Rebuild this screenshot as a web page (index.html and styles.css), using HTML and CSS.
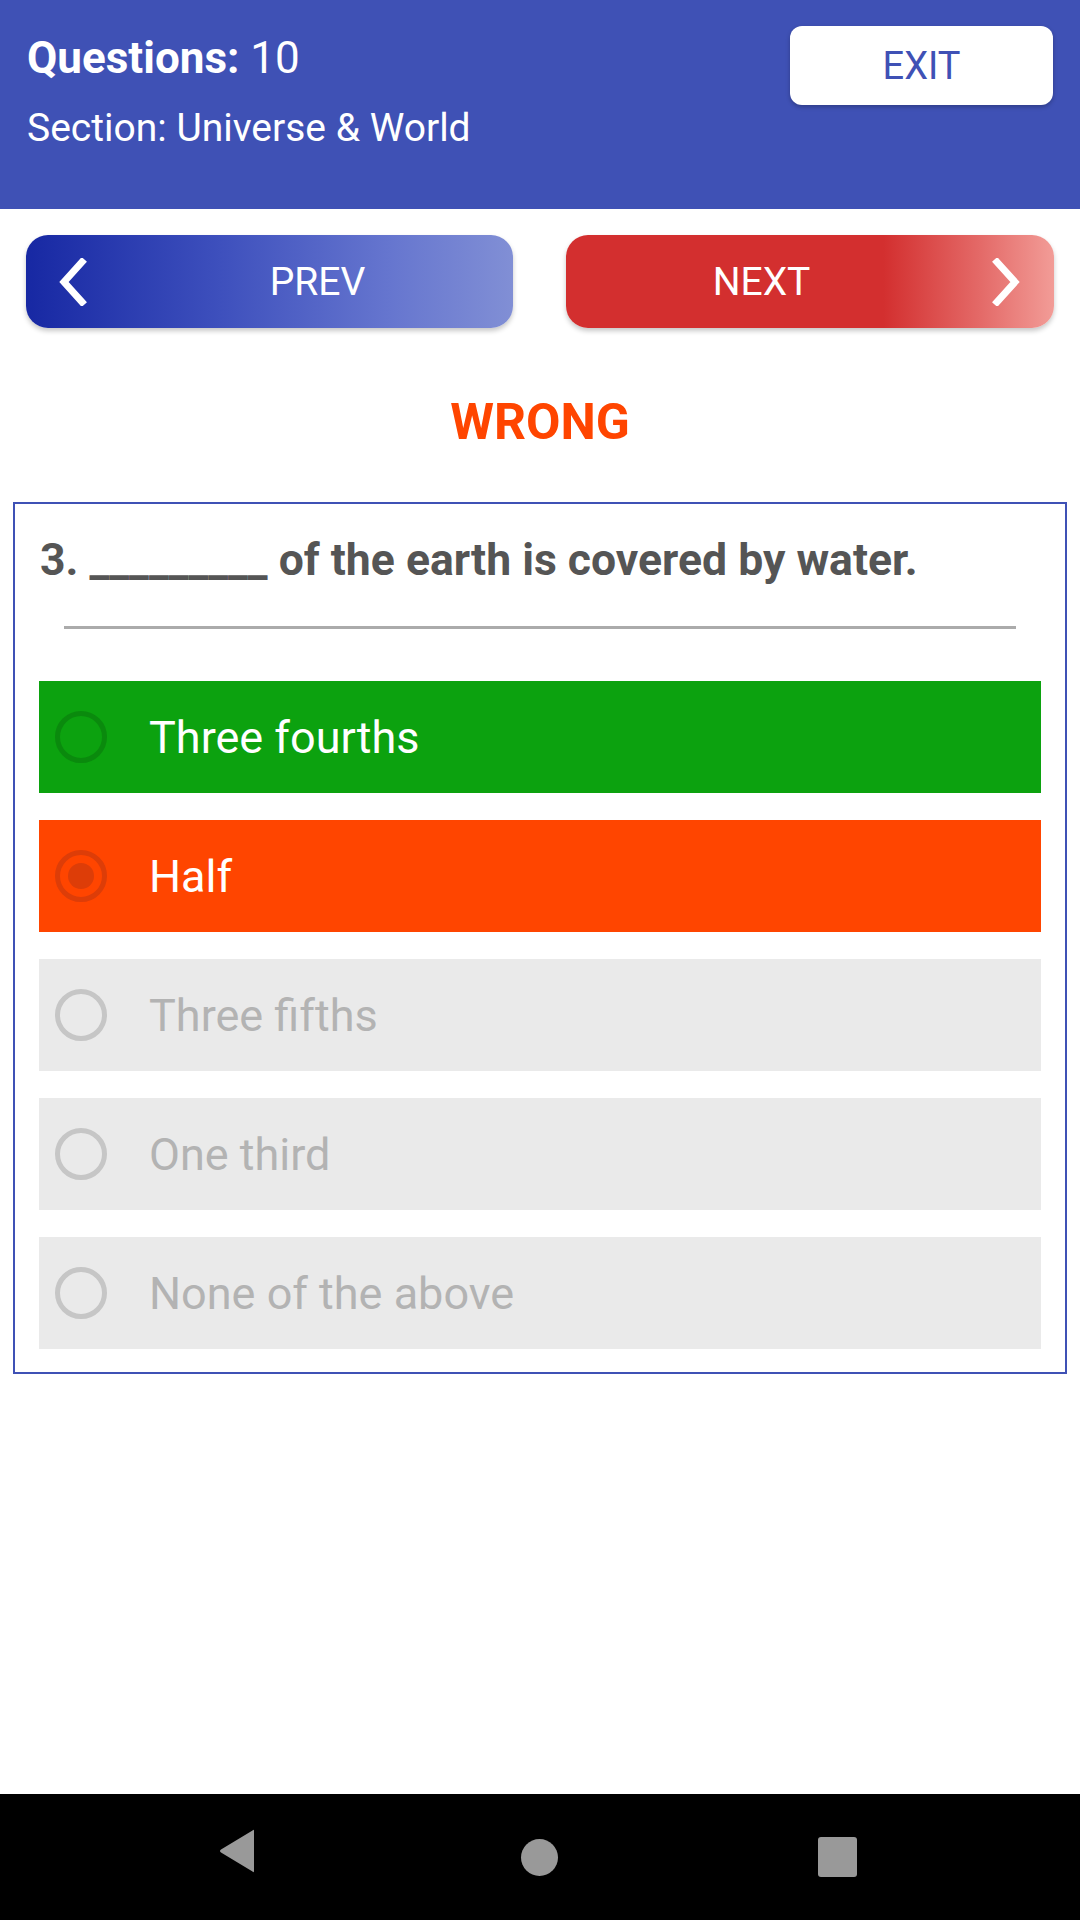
FILE: index.html
```html
<!DOCTYPE html>
<html>
<head>
<meta charset="utf-8">
<link rel="stylesheet" href="styles.css">
</head>
<body>
<div class="screen">
  <header class="top">
    <div class="info">
      <div class="count"><b>Questions:</b> 10</div>
      <div class="section">Section: Universe &amp; World</div>
    </div>
    <button class="exit">EXIT</button>
  </header>

  <div class="nav">
    <button class="navbtn prev">
      <svg class="chev chev-left" viewBox="0 0 30 48" width="30" height="48"><path d="M25 4 L7 24 L25 44" fill="none" stroke="#fff" stroke-width="7" stroke-linecap="square" stroke-linejoin="miter"/></svg>
      <span>PREV</span>
    </button>
    <button class="navbtn next">
      <span>NEXT</span>
      <svg class="chev chev-right" viewBox="0 0 30 48" width="30" height="48"><path d="M5 4 L23 24 L5 44" fill="none" stroke="#fff" stroke-width="7" stroke-linecap="square" stroke-linejoin="miter"/></svg>
    </button>
  </div>

  <div class="verdict">WRONG</div>

  <div class="card">
    <div class="question">3. _________ of the earth is covered by water.</div>
    <div class="divider"></div>
    <div class="options">
      <div class="opt correct"><span class="radio"></span><span class="label">Three fourths</span></div>
      <div class="opt wrong"><span class="radio checked"></span><span class="label">Half</span></div>
      <div class="opt"><span class="radio"></span><span class="label">Three fifths</span></div>
      <div class="opt"><span class="radio"></span><span class="label">One third</span></div>
      <div class="opt"><span class="radio"></span><span class="label">None of the above</span></div>
    </div>
  </div>

  <div class="spacer"></div>

  <div class="sysnav">
    <svg width="40" height="44" viewBox="0 0 40 44"><path d="M36 2 L36 42 Q36 44 34.5 42.5 L3 23.5 Q1 22 3 20.5 L34.5 1.5 Q36 0 36 2 Z" fill="#999"/></svg>
    <span class="home"></span>
    <span class="recent"></span>
  </div>
</div>
</body>
</html>
```
FILE: styles.css
```css
* { box-sizing: border-box; }
html, body { margin: 0; padding: 0; }
body { font-family: Roboto, "Noto Sans", sans-serif; background: #fff; }
.screen { width: 1080px; height: 1920px; display: flex; flex-direction: column; }

.top {
  background: #3F51B5;
  height: 209px;
  display: flex;
  justify-content: space-between;
  align-items: flex-start;
  padding: 26px 27px 0 27px;
  color: #fff;
}
.info { padding-top: 8px; }
.count { font-size: 44px; line-height: 48px; }
.count b { font-weight: 700; }
.section { font-size: 39px; line-height: 48px; margin-top: 22px; }
.exit {
  width: 263px; height: 79px;
  background: #fff; border: none; border-radius: 12px;
  color: #3F51B5; font-family: Roboto, sans-serif; font-size: 38px;
  box-shadow: 0 2px 4px rgba(0,0,0,0.25);
  padding: 0;
}

.nav {
  display: flex;
  gap: 53px;
  padding: 0 26px;
  margin-top: 26px;
}
.navbtn {
  flex: 1;
  height: 93px;
  border: none;
  border-radius: 22px;
  display: flex;
  align-items: center;
  color: #fff;
  font-family: Roboto, sans-serif;
  font-size: 39px;
  padding: 0;
  box-shadow: 0 3px 5px rgba(0,0,0,0.22);
}
.navbtn span { flex: 1; text-align: center; }
.prev { background: linear-gradient(90deg, #1728A3 0%, #3E50BD 40%, #6676CF 75%, #818FD5 100%); padding-left: 31px; }
.prev span { padding-left: 35px; }
.next { background: linear-gradient(90deg, #D32F2F 0%, #D32F2F 65%, #E46A68 85%, #F29C97 100%); padding-right: 32px; }
.next span { padding-right: 35px; }
.chev { display: block; flex: none; }

.verdict {
  text-align: center;
  color: #FF4500;
  font-weight: 700;
  font-size: 50px;
  line-height: 60px;
  margin-top: 64px;
}

.card {
  margin: 50px 13px 0 13px;
  border: 2px solid #3F51B5;
  padding: 0 24px 23px 24px;
}
.question {
  font-size: 44.5px;
  font-weight: 700;
  color: #555;
  line-height: 52px;
  padding: 30px 0 0 1px;
}
.divider {
  height: 3px;
  background: #ABABAB;
  margin: 40px 25px 0 25px;
}
.options {
  display: flex;
  flex-direction: column;
  gap: 27px;
  margin-top: 52px;
}
.opt {
  height: 112px;
  background: #EAEAEA;
  display: flex;
  align-items: center;
  padding-left: 16px;
  color: #B3B3B3;
  font-size: 45px;
}
.opt.correct { background: #0CA20F; color: #fff; }
.opt.wrong { background: #FF4500; color: #fff; }
.radio {
  width: 52px; height: 52px;
  border-radius: 50%;
  border: 5px solid #C6C6C6;
  flex: none;
  margin-right: 42px;
  display: flex; align-items: center; justify-content: center;
}
.correct .radio { border-color: #0A8A0D; }
.wrong .radio { border-color: #DD3D08; }
.radio.checked::after {
  content: "";
  width: 26px; height: 26px; border-radius: 50%;
  background: #DD3D08;
}

.spacer { flex: 1; }
.sysnav {
  height: 126px;
  background: #000;
  position: relative;
}
.sysnav svg { position: absolute; left: 218px; top: 35px; }
.home { position: absolute; left: 521px; top: 45px; width: 37px; height: 37px; border-radius: 50%; background: #999; }
.recent { position: absolute; left: 818px; top: 43px; width: 39px; height: 40px; border-radius: 3px; background: #999; }
```
